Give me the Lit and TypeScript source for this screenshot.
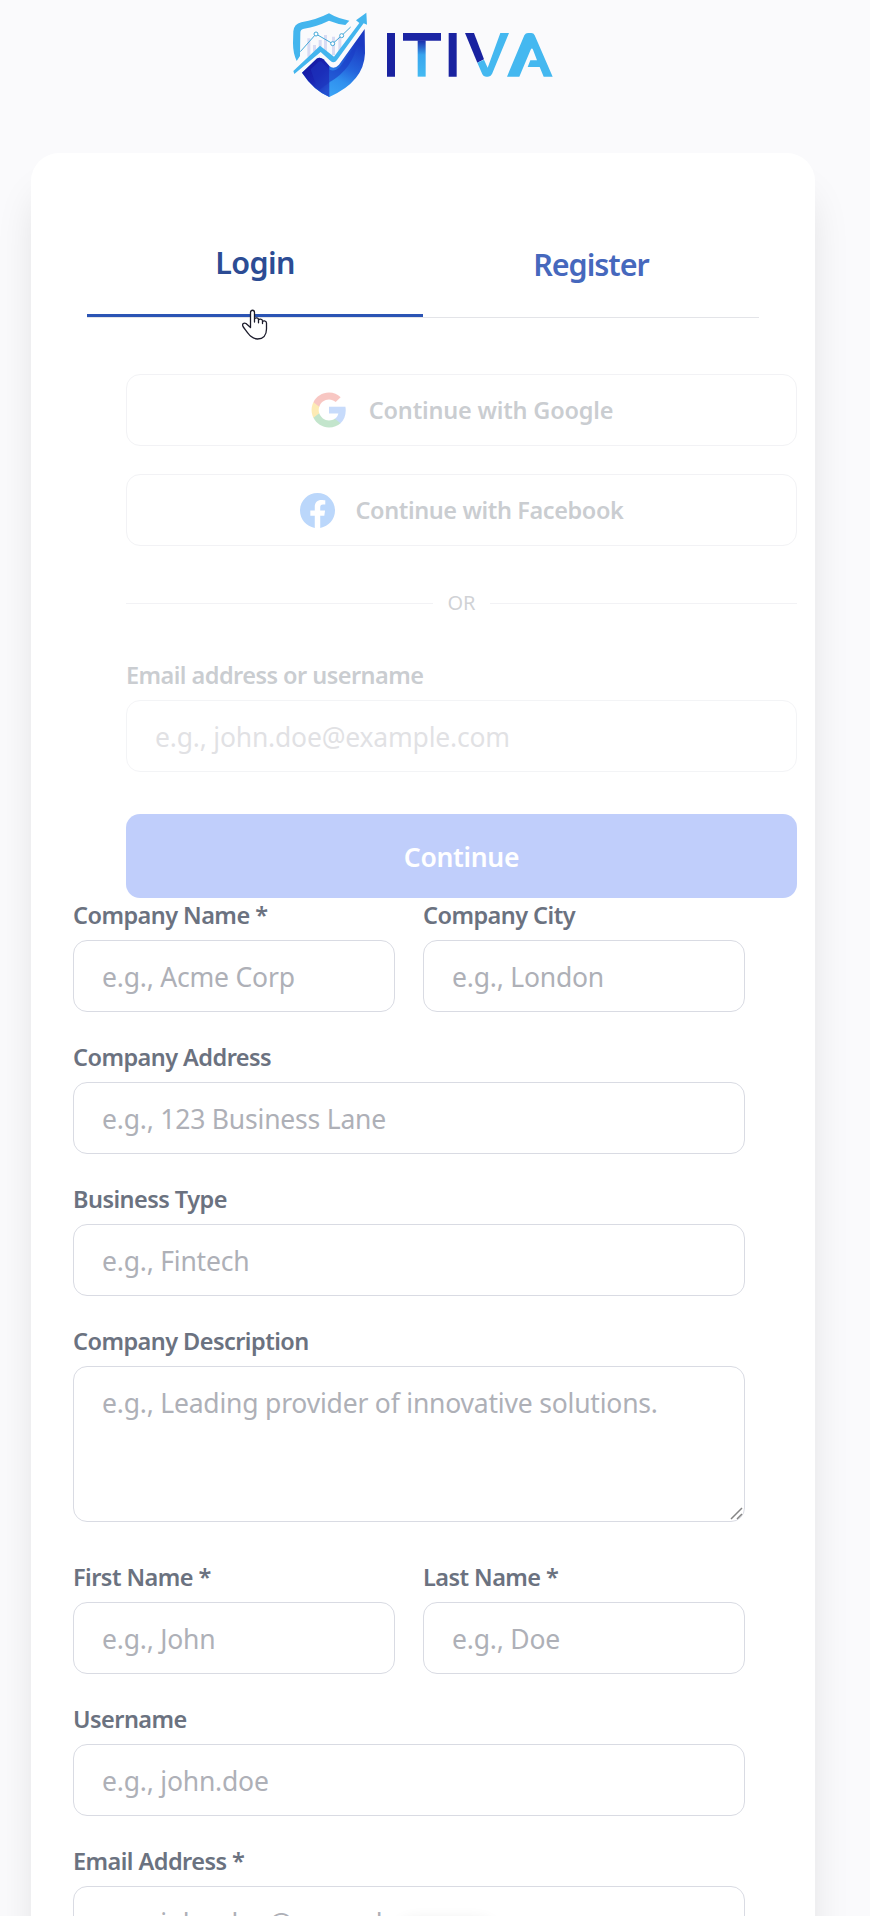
import { LitElement, html, css, svg } from "lit";
import { customElement, property } from "lit/decorators.js";

@customElement("brand-logo")
class BrandLogo extends LitElement {
  static styles = css`:host { display: block; } svg { display: block; }`;
  render() {
    return html`<svg width="300" height="110" viewBox="0 0 900 330">
      <defs>
        <linearGradient id="shieldR" gradientUnits="userSpaceOnUse" x1="185" y1="290" x2="262" y2="130"><stop offset="0" stop-color="#3aa4f6"/><stop offset=".3" stop-color="#3090ee"/><stop offset=".55" stop-color="#2464dc"/><stop offset="1" stop-color="#1b39c2"/></linearGradient>
        <linearGradient id="shieldL" x1="0" y1="0" x2=".7" y2="1"><stop offset="0" stop-color="#14139a"/><stop offset=".6" stop-color="#1a26b4"/><stop offset="1" stop-color="#2450d0"/></linearGradient>
        <linearGradient id="stem" x1="0" y1="0" x2="0" y2="1"><stop offset="0" stop-color="#1b2aab"/><stop offset=".4" stop-color="#38a5ee"/><stop offset="1" stop-color="#44baf2"/></linearGradient>
      </defs>
      <path d="M80 183 Q69 160 69 130 L70 94 Q72 72 94 67 Q138 60 177 40 Q204 56 238 62 L226 75 Q202 72 177 62 Q140 80 102 86 Q91 88 91 98 L90 168 Z" fill="#43b5ee"/>
      <path d="M112 115h9v55h-9zM129 135h9v20h-9zM146 120h9v20h-9zM162 105h9v50h-9zM186 110h9v55h-9zM205 110h9v45h-9z" fill="#d9dcf3"/>
      <path d="M91 155 L138 102 L188 131 L215 107 L242 81" fill="none" stroke="#43a8d8" stroke-width="3"/>
      <g fill="#fff" stroke="#43a8d8" stroke-width="3"><circle cx="138" cy="102" r="6"/><circle cx="188" cy="131" r="6"/><circle cx="215" cy="107" r="6"/></g>
      <path d="M96 218 L140 176 Q150 169 160 178 L178 198 Q192 210 207 194 L284 87 L285 160 Q282 245 178 291 Q130 270 96 218 Z" fill="url(#shieldR)"/>
      <path d="M96 218 L140 176 Q150 169 160 178 L178 198 V291 Q130 270 96 218 Z" fill="url(#shieldL)"/>
      <path d="M122 208 L145 186 Q151 181 158 188 L178 209 V247 L148 270 Q130 240 122 208Z" fill="#1c33bd" opacity=".6"/>
      <path d="M178 209 Q194 216 209 202 L262 128 Q250 205 178 247Z" fill="#1a3cc6" opacity=".65"/>
      <path d="M70 213 L150 137 L192 170 L268 69 L258 61 L289 38 L291 74 L281 70 L201 180 Q192 192 181 182 L152 156 L73 222 Z" fill="#43b5ee"/>
      <path d="M351 99h24v131h-24zM536 99h24v131h-24z" fill="#1922a0"/>
      <path d="M399 99h114v23h-114z" fill="#1b25a4"/><path d="M443 121h24v109h-24z" fill="url(#stem)"/>
      <path d="M585 99h27l30 79-20 10z" fill="#1922a0"/><path d="M622 188l20-9 11 24 38-104h26l-51 123q-4 8-12 8h-6q-8 0-11-7z" fill="#44b8f0"/>
      <path d="M711 230l52-124q4-7 11-7h10q7 0 10 7l54 124h-27l-12-29h-36l8-20h20l-12-32q-3-7-7 0l-34 81z" fill="#44b8f0"/>
    </svg>`;
  }
}

@customElement("form-field")
class FormField extends LitElement {
  @property() label = "";
  @property() placeholder = "";
  @property({ type: Boolean }) multiline = false;
  static styles = css`
    :host { display: block; min-width: 0; }
    .label { display: block; height: 35px; margin-bottom: 7px; color: var(--label, #6b7280); font: 600 23.5px/35px "Noto Sans", sans-serif; letter-spacing: -0.55px; white-space: nowrap; }
    .box { position: relative; }
    .control { display: block; box-sizing: border-box; width: 100%; height: 72px; margin: 0; padding: 2px 28px 0; border: 1px solid #d9dbe3; border-radius: 14px; background: #fff; color: #374151; font: 400 26.5px/42px "Noto Sans", sans-serif; letter-spacing: -0.2px; outline: none; }
    .area { height: 156px; padding-top: 15px; resize: none; overflow: hidden; }
    .control::placeholder { color: var(--hint, #aeb0b7); opacity: 1; }
    .grip { position: absolute; right: 2px; bottom: 2px; }
  `;
  render() {
    return html`<label class="label">${this.label}</label>
      ${this.multiline
        ? html`<div class="box"><textarea class="control area" placeholder=${this.placeholder}></textarea><svg class="grip" width="13" height="13" viewBox="0 0 13 13"><path d="M1 12 12 1M7 12l5-5" stroke="#858585" stroke-width="1.500"/></svg></div>`
        : html`<input class="control" placeholder=${this.placeholder} />`}`;
  }
}

const google = svg`<path fill="#4285F4" d="M22.56 12.25c0-.78-.07-1.53-.2-2.25H12v4.26h5.92c-.26 1.37-1.04 2.53-2.21 3.31v2.77h3.57c2.08-1.92 3.28-4.74 3.28-8.09z"/><path fill="#34A853" d="M12 23c2.97 0 5.46-.98 7.28-2.66l-3.57-2.77c-.98.66-2.23 1.06-3.71 1.06-2.86 0-5.29-1.93-6.16-4.53H2.18v2.84C3.99 20.53 7.7 23 12 23z"/><path fill="#FBBC05" d="M5.84 14.09c-.22-.66-.35-1.36-.35-2.09s.13-1.43.35-2.09V7.07H2.18C1.43 8.55 1 10.22 1 12s.43 3.45 1.18 4.93l2.85-2.22.81-.62z"/><path fill="#EA4335" d="M12 5.38c1.62 0 3.06.56 4.21 1.64l3.15-3.15C17.45 2.09 14.97 1 12 1 7.7 1 3.99 3.47 2.18 7.07l3.66 2.84c.87-2.6 3.3-4.53 6.16-4.53z"/>`;
const facebook = svg`<path fill="#1877F2" d="M24 12.073c0-6.627-5.373-12-12-12s-12 5.373-12 12c0 5.99 4.388 10.954 10.125 11.854v-8.385H7.078v-3.47h3.047V9.43c0-3.007 1.792-4.669 4.533-4.669 1.312 0 2.686.235 2.686.235v2.953H15.83c-1.491 0-1.956.925-1.956 1.874v2.25h3.328l-.532 3.47h-2.796v8.385C19.612 23.027 24 18.062 24 12.073z"/>`;

@customElement("app-root")
class AppRoot extends LitElement {
  static styles = css`
    :host { display: block; position: relative; box-sizing: border-box; height: 1916px; overflow: hidden; background: #fafafc; font-family: "Noto Sans", sans-serif; }
    .brand { height: 153px; padding-left: 270px; box-sizing: border-box; }
    .card { box-sizing: border-box; width: 784px; height: 1900px; margin-left: 31px; padding: 84px 56px 0; border-radius: 28px; background: #fff; box-shadow: 0 36px 42px -7px rgba(0,0,0,.125); }
    .tabs { display: grid; grid-template-columns: 1fr 1fr; height: 80px; border-bottom: 1px solid #e3e4e8; }
    .tab { display: flex; justify-content: center; box-sizing: border-box; padding: 2px 0 0; border: 0; background: none; color: #4668bd; font: 600 30.5px/50px "Noto Sans", sans-serif; letter-spacing: -1px; }
    .active { padding-top: 0; border-bottom: 3px solid #2b54b4; color: #2c4c94; letter-spacing: -0.6px; }
    .login { --label: #4b5563; --hint: #9a9ca5; width: 671px; margin: 56px 0 0 39px; opacity: .29; }
    .social { display: flex; align-items: center; justify-content: center; box-sizing: border-box; height: 72px; margin-bottom: 28px; gap: 21px; border: 1px solid #d3d5dd; border-radius: 14px; color: #4b5563; font: 600 23.5px/35px "Noto Sans", sans-serif; letter-spacing: -0.4px; }
    .google { letter-spacing: -0.2px; }
    .or { display: grid; grid-template-columns: 1fr auto 1fr; align-items: center; gap: 14px; height: 28px; margin: 42px 0; color: #5f6673; font-size: 20px; line-height: 30px; }
    .line { height: 1px; background: #d3d5dd; }
    .submit { display: block; width: 100%; height: 84px; margin-top: 42px; padding: 2px 0 0; border: 0; border-radius: 14px; background: #2a5af2; color: #fff; font: 600 26.5px/82px "Noto Sans", sans-serif; letter-spacing: -0.3px; }
    .register { display: grid; grid-template-columns: 322px 322px; column-gap: 28px; row-gap: 28px; margin: 0 0 0 -14px; }
    .wide { grid-column: 1 / -1; }
    .area { margin-bottom: 10px; }
    .cursor { position: absolute; left: 241px; top: 309px; }
    .toast { position: absolute; left: 396px; top: 1922px; width: 100px; height: 40px; border-radius: 20px; background: #fff; box-shadow: 0 0 16px rgba(0,0,0,.12); }
  `;
  render() {
    return html`
      <header class="brand"><brand-logo></brand-logo></header>
      <main class="card">
        <nav class="tabs"><button class="tab active">Login</button><button class="tab">Register</button></nav>
        <section class="login">
          <div class="social google"><svg width="38" height="38" viewBox="0 0 24 24">${google}</svg><span>Continue with Google</span></div>
          <div class="social"><svg width="35" height="35" viewBox="0 0 24 24">${facebook}</svg><span>Continue with Facebook</span></div>
          <div class="or"><span class="line"></span><span>OR</span><span class="line"></span></div>
          <form-field label="Email address or username" placeholder="e.g., john.doe@example.com"></form-field>
          <button class="submit">Continue</button>
        </section>
        <section class="register">
          <form-field label="Company Name *" placeholder="e.g., Acme Corp"></form-field>
          <form-field label="Company City" placeholder="e.g., London"></form-field>
          <form-field class="wide" label="Company Address" placeholder="e.g., 123 Business Lane"></form-field>
          <form-field class="wide" label="Business Type" placeholder="e.g., Fintech"></form-field>
          <form-field class="wide area" multiline label="Company Description" placeholder="e.g., Leading provider of innovative solutions."></form-field>
          <form-field label="First Name *" placeholder="e.g., John"></form-field>
          <form-field label="Last Name *" placeholder="e.g., Doe"></form-field>
          <form-field class="wide" label="Username" placeholder="e.g., john.doe"></form-field>
          <form-field class="wide" label="Email Address *" placeholder="e.g., john.doe@example.com"></form-field>
        </section>
      </main>
      <div class="toast"></div>
      <svg class="cursor" width="28" height="34" viewBox="0 0 28 34"><path d="M9.500 18.500V3.500c0-3 4-3 4 0v9.500V10.500c0-2.200 4-2.200 4 .3v3-2.300c0-2 4-1.700 4 .5v2.500-1.500c0-1.800 4-1.300 4 1v6c0 6.500-3.500 10-9 10c-6.500 0-9.500-6-14.500-12.500c-1.200-2.700 1-4 3-3z" fill="#fff" stroke="#1b1b2b" stroke-width="1.300" stroke-linejoin="round"/></svg>`;
  }
}
